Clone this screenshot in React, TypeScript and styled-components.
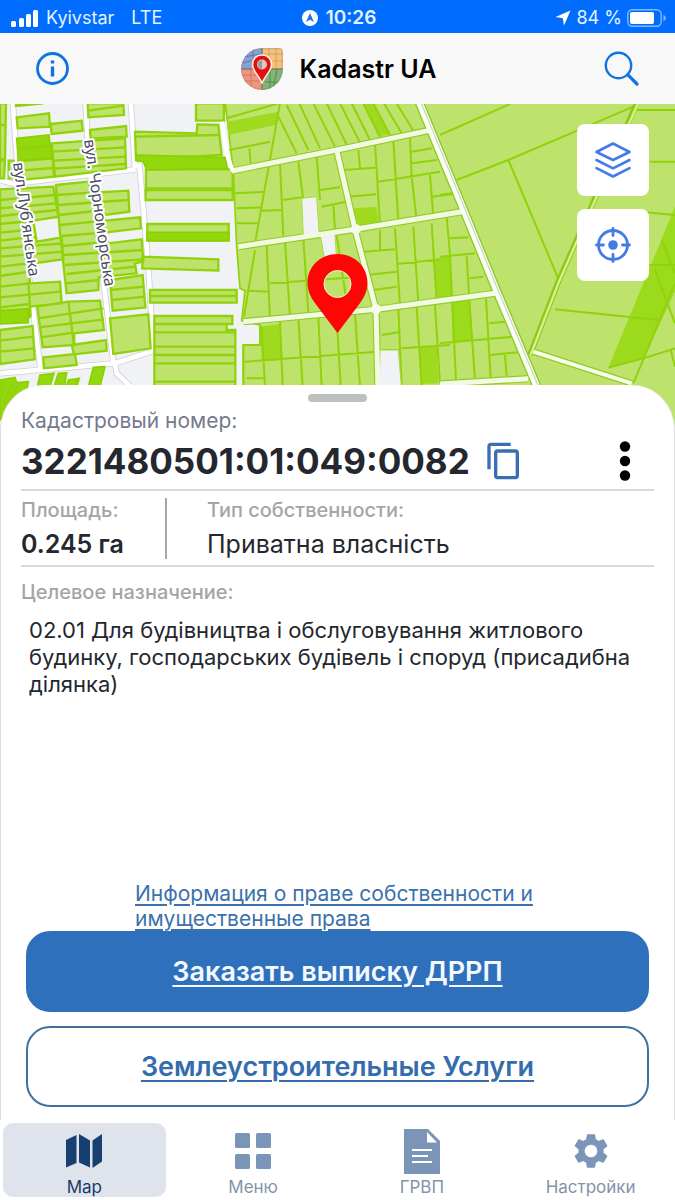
import React from "react";
import styled, { createGlobalStyle, css } from "styled-components";
import { MdContentCopy, MdSettings } from "react-icons/md";

const GlobalStyle = createGlobalStyle`
  * { box-sizing: border-box; }
  body {
    margin: 0;
    background: #fff;
    font-family: Inter, "Liberation Sans", sans-serif;
    color: #24272e;
  }
  button { font: inherit; color: inherit; background: none; border: 0; padding: 0; cursor: pointer; }
  svg { display: block; flex: none; }
`;

const Screen = styled.div`
  display: flex;
  flex-direction: column;
  min-height: 100vh;
`;

const StatusBar = styled.div`
  display: grid;
  grid-template-columns: 1fr auto 1fr;
  align-items: center;
  height: 33px;
  padding: 2px 8px 0 11px;
  background: #006dff;
  color: #e4f3ff;
  font-size: 18px;
  line-height: 24px;
`;

const StatusGroup = styled.div<{ $gap: number; $end?: boolean }>`
  display: flex;
  align-items: center;
  gap: ${(p) => p.$gap}px;
  justify-content: ${(p) => (p.$end ? "flex-end" : "flex-start")};
`;

const Carrier = styled.span`
  margin-right: 10px;
`;

const Clock = styled.time`
  font-size: 19px;
  font-weight: 600;
`;

const Header = styled.header`
  display: flex;
  align-items: center;
  justify-content: space-between;
  height: 71px;
  padding: 0 36px;
  background: #f8f8f9;
  color: #0f74e0;
`;

const Brand = styled.h1`
  display: flex;
  align-items: center;
  gap: 17px;
  margin: 0;
  padding-left: 4px;
  color: #000;
  font-size: 25px;
  line-height: 32px;
  font-weight: 600;
`;

const MapArea = styled.section`
  position: relative;
  height: 324px;
  background: #f0f2f5;
`;

const MapSvg = styled.svg`
  width: 100%;
  height: 100%;
`;

const MapTools = styled.div`
  position: absolute;
  top: 20px;
  right: 26px;
  display: grid;
  gap: 13px;
`;

const MapTool = styled.button`
  display: grid;
  place-items: center;
  width: 72px;
  height: 72px;
  border-radius: 8px;
  background: #fff;
  color: #447be6;
`;

const Sheet = styled.main`
  position: relative;
  flex: 1;
  display: flex;
  flex-direction: column;
  margin-top: -43px;
  padding: 9px 20px 13px;
  background: #fff;
  border: 1px solid #dedede;
  border-top: 0;
  border-bottom: 0;
  border-radius: 44px 44px 0 0;
`;

const Handle = styled.div`
  align-self: center;
  width: 59px;
  height: 8px;
  border-radius: 4px;
  background: #bebfbf;
`;

const Label = styled.div<{ $main?: boolean }>`
  ${(p) =>
    p.$main
      ? css`
          color: #747a8d;
          font-size: 21px;
          font-weight: 400;
        `
      : css`
          color: #a5a5a6;
          font-size: 20px;
          font-weight: 500;
        `}
  line-height: 24px;
`;

const NumberBlock = styled.section`
  margin-top: 7px;
  border-bottom: 2px solid #d9d9da;
`;

const NumberRow = styled.div`
  display: flex;
  align-items: center;
  height: 56px;
  padding-right: 23px;
`;

const CadastralNumber = styled.strong`
  font-size: 35px;
  line-height: 44px;
  font-weight: 700;
`;

const CopyButton = styled.button`
  margin-left: 14px;
  color: #3a6fb5;
`;

const MoreButton = styled.button`
  margin-left: auto;
`;

const Facts = styled.div`
  display: flex;
  padding: 7px 0 6px;
  border-bottom: 2px solid #d9d9da;
`;

const Fact = styled.div<{ $divided?: boolean }>`
  ${(p) =>
    p.$divided &&
    css`
      width: 146px;
      margin-right: 40px;
      border-right: 2px solid #a6a6a7;
    `}
`;

const FactValue = styled.div<{ $strong?: boolean }>`
  margin-top: 7px;
  font-size: 25px;
  line-height: 30px;
  font-weight: ${(p) => (p.$strong ? 600 : 400)};
`;

const Purpose = styled.section`
  flex: 1;
  padding-top: 13px;
`;

const PurposeText = styled.p`
  margin: 13px 0 0;
  padding: 0 8px;
  font-size: 22px;
  line-height: 27px;
`;

const RightsLink = styled.a`
  align-self: center;
  width: 405px;
  max-width: 100%;
  color: #3b71ad;
  font-size: 21px;
  line-height: 25px;
  text-underline-offset: 3px;
`;

const Actions = styled.div`
  display: grid;
  gap: 14px;
  padding: 0 5px;
`;

const Action = styled.button<{ $filled?: boolean }>`
  height: 81px;
  border: 2px solid ${(p) => (p.$filled ? "#2f70bd" : "#3f719f")};
  border-radius: 24px;
  background: ${(p) => (p.$filled ? "#2f70bd" : "#fff")};
  color: ${(p) => (p.$filled ? "#f4f9ff" : "#356cad")};
  font-size: 27px;
  line-height: 34px;
  font-weight: 600;
  text-decoration: underline;
  text-decoration-thickness: 2px;
  text-underline-offset: 4px;
`;

const TabBar = styled.nav`
  display: grid;
  grid-template-columns: repeat(4, 1fr);
  gap: 6px;
  height: 80px;
  padding: 3px;
  background: #fff;
`;

const Tab = styled.button<{ $active?: boolean }>`
  display: flex;
  flex-direction: column;
  align-items: center;
  justify-content: flex-end;
  height: 74px;
  border-radius: 10px;
  background: ${(p) => (p.$active ? "#dfe3eb" : "transparent")};
  color: ${(p) => (p.$active ? "#163a66" : "#8393aa")};
  font-size: 17px;
  line-height: 20px;
`;

const TabIcon = styled.span`
  display: grid;
  place-items: center;
  height: 46px;
  margin-bottom: 3px;
`;

/* Parcels west of the main block, in thirds of a pixel */
const westParcels =
  "M0 10H18L15 178H0ZM0 182L15 180L12 235H0ZM26 182H40V235H26ZM48 10H130L48 18ZM50 52L147 40L150 80L53 85Z" +
  "M55 184L158 175L162 230L60 240ZM152 72L245 62L248 92L155 102ZM155 130L375 115L378 205L165 230Z" +
  "M263 10H370L372 45L265 52ZM270 90L378 78L380 110L272 115Z" +
  "M0 268L160 260L175 350L100 362L110 425L185 412L190 478L85 492L90 550L180 545L185 610L90 620V650L0 665Z" +
  "M0 690L98 678L104 778L0 792Z" +
  "M168 255L265 245L275 278L385 272L388 335L312 345L315 362L420 352L423 385L312 398L325 430L425 418L430 485L405 490L410 520L296 532L295 570L200 580L180 400Z" +
  "M330 540L428 525L436 622L338 632ZM330 655L445 643L452 745L340 762Z" +
  "M112 620L205 605L300 602L312 690L222 700L223 735L128 742ZM130 772L225 762L230 795L132 805ZM215 735L318 720L320 752L222 763Z" +
  "M588 10H672V62H588ZM678 20H700V100H690ZM405 95L590 100L592 73L655 75L665 165L408 180ZM438 208H698V265H438ZM437 270H698V300H437Z" +
  "M442 372H686V422H442ZM427 470L655 478V512L427 505ZM450 570H710V608H450ZM463 648H697V672H680V690H706V860H463Z";
const westDark =
  "M50 115L147 105L155 175L55 182ZM408 165L675 172L682 205L440 210L430 185L410 182ZM442 397H686V422H442ZM0 632L85 626V668L0 672Z" +
  "M120 825L162 820L150 860H112ZM175 820L200 818L193 860H162ZM205 840L238 835L230 860H198ZM280 802L315 800L300 860H265ZM0 840L45 832L50 848L85 845L80 870L0 960Z";
const westLines =
  "M0 75H17M55 212L160 204M158 155L375 142M160 182L377 170M162 206L377 192M265 32L370 17M54 145L150 138" +
  "M0 300L165 285M0 325L170 310M0 348L172 330M0 372L100 362M0 398L105 388M0 422L108 410M0 445L188 430M0 470L190 455M0 500L85 490M0 528L88 515M0 560L90 550M0 592L180 575M0 622L90 612M85 545L92 650" +
  "M0 722L100 710M0 755L102 745M172 285L270 278M175 315L385 300M178 345L312 330M180 375L315 362M185 408L312 398M188 438L325 425M192 465L428 450M195 495L430 478M200 522L405 500M200 550L296 540" +
  "M330 570L432 560M335 600L435 590M115 655L310 625M118 682L312 658M122 712L220 698M205 605L222 735" +
  "M405 110L660 105M450 588H710M463 672H680M463 697H706M463 740H706M463 765H706M463 790H706M463 845H706M15 850L0 890M35 850L8 920M55 855L20 910";
const westRoads =
  "M38 0L52 200L72 400L95 600L122 808M256 0L268 200L305 500L340 785M392 0L405 206M418 190L445 500L460 752M0 240L40 252L405 208M0 820L345 790L460 752M345 790L350 820L390 858";

/* Regular grid of plots around the pin */
const gridLines =
  "M20 55L175 10M28 150L150 125M180 10L105 430M88 145L92 190M175 50L230 160M200 15L265 150M238 10L300 145M280 10L345 140M320 10L382 138M360 10L420 128M395 10L450 120M430 10L480 112M460 10L510 105M492 10L545 100M530 10L580 92" +
  "M180 190L190 410M235 185L250 300M290 170L300 300M45 280L135 275M50 325L125 322M50 370H115M125 332L188 330M190 300L245 292M300 270L360 262M305 320L380 305M340 315L345 388" +
  "M415 150L420 205M370 210L465 203M465 130L480 375M385 290L468 283M520 120L535 365M475 245L660 215M570 110L575 230L590 360M575 155L635 145M575 190L650 180M630 225L640 350M635 290L700 282" +
  "M105 450L72 650M140 435L150 660M195 425L210 650M250 415L265 640M80 572L150 575M150 550L430 530M350 405L385 640M480 390V450M430 455L525 448M525 385L540 615M580 380L595 610M635 370L650 605M440 525L530 515M460 570L530 560M530 492L690 475" +
  "M180 660L188 860M235 655L248 860M295 650L305 860M350 650L362 860M405 640L420 860M75 785L470 755M125 680L135 860M80 835H130M120 675V735H70V860M485 705L535 697M485 750H540M535 625L545 860M590 620L605 860M645 615L660 850M545 745L690 735";
const gridDark =
  "M22 65L178 35L165 75L25 105ZM430 10H460L510 103L480 108ZM400 325L470 320L475 370L415 378ZM122 680L180 672L185 780L125 785ZM595 740L650 738L655 850L605 852ZM640 480L690 475V598L650 600Z";
const gridGaps = "M245 295L290 290L298 405L250 412ZM300 400L345 403L350 480L315 485ZM480 750L535 750L545 870H478Z";
const gridRoads = "M35 213L350 150L625 92M55 440L405 388L725 335M70 665L470 628L825 580M350 150L405 388L468 628L474 870M660 852L925 836";

/* Large fields in the east */
const eastLines =
  "M0 105L210 12M50 240L205 180L580 20M205 180L360 548M345 628L655 660M580 850L705 550M505 803L610 775L705 745M590 30H705M630 185H705M600 335L705 345M665 420L705 520M600 495H705M645 510L705 670M692 750L705 800" +
  "M0 285L35 280M20 350L30 465L48 845M0 470L105 460M30 415L85 412M80 468L88 600L105 840M88 535L130 530M0 730L220 710M138 595L152 835M148 670L195 665M150 765L235 757M195 765L200 830";
const eastDark = "M705 320L505 803L610 775L705 575ZM0 470L30 468L35 588L0 595ZM35 605L90 600L95 720L38 725Z";

function Map() {
  return (
    <MapSvg viewBox="0 104 675 324" preserveAspectRatio="xMidYMin slice" role="img" aria-label="Map">
      <rect x="0" y="104" width="675" height="324" fill="#f0f2f5" />
      <g transform="translate(0 100) scale(.33333)" fill="none">
        <path d={westRoads} stroke="#cfd1d6" strokeWidth="19" />
        <path d={westRoads} stroke="#fff" strokeWidth="14" />
        <path d={westParcels} fill="#bde36c" stroke="#91d20c" strokeWidth="7" />
        <path d={westDark} fill="#93d80d" stroke="#8bd000" strokeWidth="5" />
        <path d={westLines} stroke="#91d20c" strokeWidth="7" />
      </g>
      <g transform="translate(220 100) scale(.33333)" fill="none">
        <path
          d="M15 0H1400V990H70V735H120V675L65 662L75 572L60 565L50 440L40 215Z"
          fill="#bde36c"
          stroke="#91d20c"
          strokeWidth="5"
        />
        <path d={gridDark} fill="#9fda20" />
        <path d={gridLines} stroke="#91d20c" strokeWidth="6" />
        <g transform="translate(660 0)">
          <path d={eastDark} fill="#9cdb1c" />
          <path d={eastLines} stroke="#91d20c" strokeWidth="6" />
          <path d="M590 10L355 545L270 765" stroke="#8cc91a" strokeWidth="17" />
          <path d="M594 10L357 545L272 765" stroke="#d9f08c" strokeWidth="7" />
          <path d="M280 755L575 850" stroke="#94cc27" strokeWidth="20" />
          <path d="M280 755L575 850" stroke="#f7ffe8" strokeWidth="12" />
        </g>
        <path d={gridRoads} stroke="#94cc27" strokeWidth="22" strokeLinejoin="round" />
        <path d="M595 0L725 315L825 560L955 870" stroke="#8cc925" strokeWidth="28" />
        <path d={gridGaps} fill="#f0f2f5" stroke="#a8d940" strokeWidth="3" />
        <path d={gridRoads} stroke="#f2fae4" strokeWidth="15" strokeLinejoin="round" />
        <path d="M595 0L725 315L825 560L955 870" stroke="#fafff2" strokeWidth="20" />
        <path d="M600 0L730 315L830 560L960 870" stroke="#d0d4cf" strokeWidth="4" />
        <path d="M5 65L20 160L38 213" stroke="#fff" strokeWidth="12" />
        <g fill="#f6fced">
          <circle cx="408" cy="388" r="15" />
          <circle cx="468" cy="628" r="15" />
        </g>
      </g>
      <g
        fontFamily="'Noto Sans', sans-serif"
        fontSize="16"
        fill="#4b4c66"
        stroke="#fff"
        strokeWidth="4"
        strokeLinejoin="round"
        paintOrder="stroke"
      >
        <text transform="translate(13 163) rotate(82)">вул.Луб'янська</text>
        <text transform="translate(84 140) rotate(82)">вул. Чорноморська</text>
      </g>
      <path
        fill="#ff0505"
        fillRule="evenodd"
        d="M337.500 254C320.500 254 307.500 266.500 307.500 283C307.500 291 311 298 316 304.500L337.500 333L359 304.500C364 298 367.500 291 367.500 283C367.500 266.500 354.500 254 337.500 254ZM337.500 270.500A13.500 13.500 0 1 1 337.500 297.500A13.500 13.500 0 1 1 337.500 270.500Z"
      />
      <circle cx="337.500" cy="284" r="13.500" fill="none" stroke="#fff1cf" strokeWidth="1" />
    </MapSvg>
  );
}

function SignalIcon() {
  return (
    <svg width="28" height="18" viewBox="0 0 28 18" fill="#fff">
      <rect x="0" y="12" width="5" height="6" rx="1.500" />
      <rect x="8" y="9" width="5" height="9" rx="1.500" />
      <rect x="15" y="5" width="5" height="13" rx="1.500" />
      <rect x="22" y="1" width="5" height="17" rx="1.500" />
    </svg>
  );
}

function BatteryIcon() {
  return (
    <svg width="40" height="18" viewBox="0 0 40 18" fill="none">
      <rect x=".8" y=".8" width="33.400" height="16.400" rx="4.500" stroke="#7fbcff" strokeWidth="1.400" />
      <rect x="3" y="3" width="24" height="12" rx="2" fill="#fff" />
      <path d="M36.500 6C39.500 7 39.500 11 36.500 12Z" fill="#7fbcff" />
    </svg>
  );
}

function LogoIcon() {
  return (
    <svg width="42" height="42" viewBox="0 0 42 42">
      <clipPath id="drop">
        <path d="M21 0H38Q42 0 42 4V21A21 21 0 1 1 21 0Z" />
      </clipPath>
      <g clipPath="url(#drop)">
        <path fill="#8b9fd0" d="M0 0H21V21H0Z" />
        <path fill="#f4c27c" d="M21 0H42V21H21Z" />
        <path fill="#f0957f" d="M0 21H21V42H0Z" />
        <path fill="#82b477" d="M21 21H42V42H21Z" />
        <path d="M2 9L21 6M1 15L14 12M12 0V10" stroke="#6178ae" fill="none" />
        <path d="M28 0V8M35 0V21M22 6H42M32 13H42" stroke="#dba155" fill="none" />
        <path d="M0 27H16M3 33H20M10 21V42" stroke="#d87461" fill="none" />
        <path d="M29 22V42M36 21L32 42M24 34H42" stroke="#4f8d4d" fill="none" />
        <path d="M21 0V42M0 21H42" stroke="#7f806b" strokeWidth="1.500" />
        <path d="M21 .8H41V21A20.200 20.200 0 1 1 21 .8Z" fill="none" stroke="#8f8d78" strokeOpacity=".5" />
      </g>
      <path
        d="M21 7C15.300 7 11.500 11 11.500 16.500C11.500 23 17 26 21 35C25 26 30.500 23 30.500 16.500C30.500 11 26.700 7 21 7Z"
        fill="#de1212"
        stroke="#fff0e2"
        strokeWidth="1.500"
      />
      <circle cx="21" cy="16.500" r="5" fill="#e3c7ae" />
      <path d="M21 12.500V20.500A4 4 0 0 1 21 12.500Z" fill="#9099af" />
    </svg>
  );
}

function LayersIcon() {
  return (
    <svg width="36" height="36" viewBox="0 0 36 36" fill="none" stroke="currentColor" strokeWidth="2.600" strokeLinecap="round" strokeLinejoin="round">
      <path d="M1.500 10L18 1.500L34.500 10L18 18Z" />
      <path d="M1.500 18L18 26.300L34.500 18" />
      <path d="M1.500 26.200L18 34.500L34.500 26.200" />
    </svg>
  );
}

function CrosshairIcon() {
  return (
    <svg width="36" height="36" viewBox="0 0 36 36" fill="none" stroke="currentColor" strokeWidth="2.800" strokeLinecap="round">
      <circle cx="18" cy="18" r="14.500" />
      <circle cx="18" cy="18" r="4.800" fill="currentColor" stroke="none" />
      <path d="M18 1.500V8.500M18 27.500V34.500M1.500 18H8.500M27.500 18H34.500" />
    </svg>
  );
}

export default function App() {
  return (
    <>
      <GlobalStyle />
      <Screen>
        <StatusBar>
          <StatusGroup $gap={7}>
            <SignalIcon />
            <Carrier>Kyivstar</Carrier>
            <span>LTE</span>
          </StatusGroup>
          <StatusGroup $gap={8}>
            <svg width="16" height="16" viewBox="0 0 16 16">
              <circle cx="8" cy="8" r="8" fill="#fff" />
              <path d="M8 3L12 12L8 9.800L4 12Z" fill="#1b75e8" />
            </svg>
            <Clock>10:26</Clock>
          </StatusGroup>
          <StatusGroup $gap={5} $end>
            <svg width="16" height="16" viewBox="0 0 16 16">
              <path d="M15.500 .5L9 15.500L7.800 8.200L.5 7Z" fill="#fff" />
            </svg>
            <span>84 %</span>
            <BatteryIcon />
          </StatusGroup>
        </StatusBar>

        <Header>
          <button aria-label="Information">
            <svg width="33" height="33" viewBox="0 0 33 33" fill="none" stroke="currentColor">
              <circle cx="16.500" cy="16.500" r="15" strokeWidth="2.800" />
              <path d="M16.500 14.500V24.500" strokeWidth="3.400" />
              <path d="M16.500 8.500V11.500" strokeWidth="3.400" />
            </svg>
          </button>
          <Brand>
            <LogoIcon />
            Kadastr UA
          </Brand>
          <button aria-label="Search">
            <svg width="35" height="35" viewBox="0 0 35 35" fill="none" stroke="currentColor" strokeLinecap="round">
              <circle cx="14.500" cy="14.500" r="12.700" strokeWidth="2.400" />
              <path d="M23.700 23.700L33 33" strokeWidth="3.200" />
            </svg>
          </button>
        </Header>

        <MapArea>
          <Map />
          <MapTools>
            <MapTool aria-label="Layers">
              <LayersIcon />
            </MapTool>
            <MapTool aria-label="My location">
              <CrosshairIcon />
            </MapTool>
          </MapTools>
        </MapArea>

        <Sheet>
          <Handle />
          <NumberBlock>
            <Label $main>Кадастровый номер:</Label>
            <NumberRow>
              <CadastralNumber>3221480501:01:049:0082</CadastralNumber>
              <CopyButton aria-label="Copy">
                <MdContentCopy size={40} />
              </CopyButton>
              <MoreButton aria-label="More">
                <svg width="12" height="40" viewBox="0 0 12 40" fill="#000">
                  <circle cx="6" cy="5.500" r="5.200" />
                  <circle cx="6" cy="20" r="5.200" />
                  <circle cx="6" cy="34.500" r="5.200" />
                </svg>
              </MoreButton>
            </NumberRow>
          </NumberBlock>
          <Facts>
            <Fact $divided>
              <Label>Площадь:</Label>
              <FactValue $strong>0.245 га</FactValue>
            </Fact>
            <Fact>
              <Label>Тип собственности:</Label>
              <FactValue>Приватна власність</FactValue>
            </Fact>
          </Facts>
          <Purpose>
            <Label>Целевое назначение:</Label>
            <PurposeText>
              02.01 Для будівництва і обслуговування житлового будинку, господарських будівель і споруд (присадибна
              ділянка)
            </PurposeText>
          </Purpose>
          <RightsLink href="#rights">Информация о праве собственности и имущественные права</RightsLink>
          <Actions>
            <Action $filled>Заказать выписку ДРРП</Action>
            <Action>Землеустроительные Услуги</Action>
          </Actions>
        </Sheet>

        <TabBar>
          <Tab $active>
            <TabIcon>
              <svg width="36" height="34" viewBox="0 0 36 34" fill="#173f70">
                <path d="M0 6L10.500 1V29L0 33.500ZM13 0L24 6.500V33.500L13 28.500ZM26.500 6.500L36 0V27.500L26.500 34Z" />
              </svg>
            </TabIcon>
            Map
          </Tab>
          <Tab>
            <TabIcon>
              <svg width="36" height="36" viewBox="0 0 36 36" fill="#7b95b8">
                <rect width="15" height="15" rx="1.500" />
                <rect x="21" width="15" height="15" rx="1.500" />
                <rect y="21" width="15" height="15" rx="1.500" />
                <rect x="21" y="21" width="15" height="15" rx="1.500" />
              </svg>
            </TabIcon>
            Меню
          </Tab>
          <Tab>
            <TabIcon>
              <svg width="36" height="45" viewBox="0 0 36 45">
                <path d="M0 0H24L36 12V45H0Z" fill="#7b95b8" />
                <path d="M23 3L33 13.500H23Z" fill="#fff" />
                <path d="M8 21H28M8 27H24M8 33H28" stroke="#fff" strokeWidth="2" />
              </svg>
            </TabIcon>
            ГРВП
          </Tab>
          <Tab>
            <TabIcon>
              <MdSettings size={42} color="#7b95b8" />
            </TabIcon>
            Настройки
          </Tab>
        </TabBar>
      </Screen>
    </>
  );
}
